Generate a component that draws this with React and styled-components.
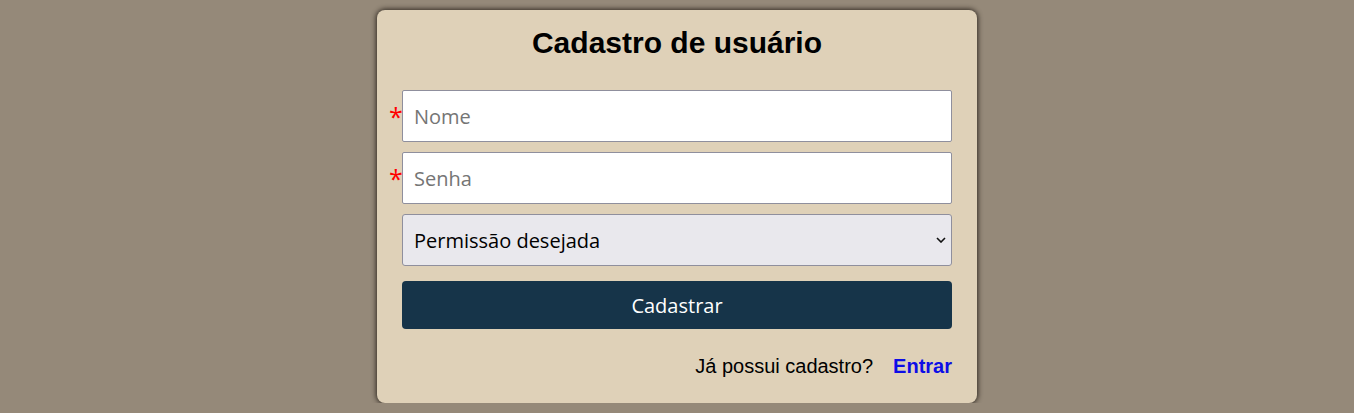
import styled, { createGlobalStyle } from "styled-components";

const GlobalStyle = createGlobalStyle`
  html, body {
    margin: 0;
    padding: 0;
    background: #958979;
    font-family: "Liberation Sans", Arial, sans-serif;
  }
`;

export default function App() {
  return (
    <>
      <GlobalStyle />
      <Styled.Page>
        <Styled.Card>
          <Styled.Title>Cadastro de usuário</Styled.Title>
          <Styled.Form onSubmit={(e) => e.preventDefault()}>
            <Styled.Field>
              <Styled.Required>*</Styled.Required>
              <Styled.Input type="text" placeholder="Nome" />
            </Styled.Field>
            <Styled.Field>
              <Styled.Required>*</Styled.Required>
              <Styled.Input type="password" placeholder="Senha" />
            </Styled.Field>
            <Styled.Field>
              <Styled.Select defaultValue="">
                <option value="" disabled>
                  Permissão desejada
                </option>
                <option value="user">Usuário</option>
                <option value="admin">Administrador</option>
              </Styled.Select>
              <Styled.Chevron width="10" height="6" viewBox="0 0 10 6">
                <path d="M1 1l4 4 4-4" fill="none" stroke="#111" strokeWidth="1.6" />
              </Styled.Chevron>
            </Styled.Field>
            <Styled.Button type="submit">Cadastrar</Styled.Button>
          </Styled.Form>
          <Styled.Footer>
            <span>Já possui cadastro?</span>
            <Styled.Link href="#">Entrar</Styled.Link>
          </Styled.Footer>
        </Styled.Card>
      </Styled.Page>
    </>
  );
}

const Styled = {
  Page: styled.div`
    display: flex;
    justify-content: center;
    padding-top: 10px;
  `,

  Card: styled.div`
    width: 600px;
    box-sizing: border-box;
    padding: 16px 25px 25px;
    background: #dfd1b8;
    border-radius: 8px;
    box-shadow: 0 0 5px 1px rgba(30, 24, 18, 0.85);
  `,

  Title: styled.h1`
    margin: 0 0 30px;
    text-align: center;
    font-size: 30px;
    font-weight: bold;
    color: #000;
  `,

  Form: styled.form`
    display: flex;
    flex-direction: column;
    gap: 10px;
  `,

  Field: styled.div`
    position: relative;
  `,

  Required: styled.span`
    position: absolute;
    left: -13px;
    top: 14px;
    color: #ff0000;
    font-family: "Open Sans", sans-serif;
    font-size: 25px;
    line-height: 1;
  `,

  Input: styled.input`
    display: block;
    width: 100%;
    height: 52px;
    box-sizing: border-box;
    padding: 0 11px;
    border: 1px solid #8f8f9d;
    border-radius: 2px;
    background: #fff;
    font-family: "Open Sans", sans-serif;
    font-size: 20px;
    color: #000;

    &::placeholder {
      color: #757575;
    }
  `,

  Select: styled.select`
    display: block;
    width: 100%;
    height: 52px;
    box-sizing: border-box;
    padding: 0 11px;
    appearance: none;
    border: 1px solid #8f8f9d;
    border-radius: 3px;
    background: #e9e8ed;
    font-family: "Open Sans", sans-serif;
    font-size: 20px;
    color: #000;
  `,

  Chevron: styled.svg`
    position: absolute;
    right: 6px;
    top: 23px;
    pointer-events: none;
  `,

  Button: styled.button`
    margin-top: 5px;
    height: 48px;
    border: none;
    border-radius: 4px;
    background: #163449;
    color: #fff;
    font-family: "Open Sans", sans-serif;
    font-size: 20px;
    cursor: pointer;
  `,

  Footer: styled.div`
    display: flex;
    justify-content: flex-end;
    align-items: baseline;
    gap: 20px;
    margin-top: 26px;
    font-size: 20px;
    color: #000;
  `,

  Link: styled.a`
    color: #0d0de6;
    font-weight: bold;
    text-decoration: none;
  `,
};
